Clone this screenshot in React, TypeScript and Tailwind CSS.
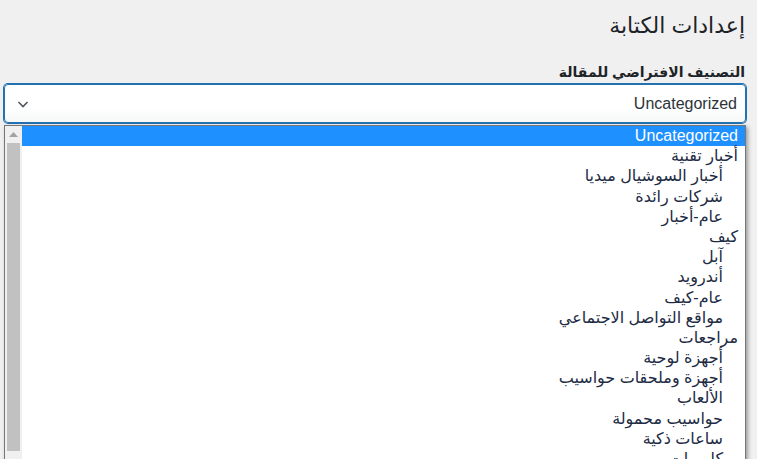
import * as React from "react"

type Cat = { name: string; depth: number }

const categories: Cat[] = [
  { name: "Uncategorized", depth: 0 },
  { name: "أخبار تقنية", depth: 0 },
  { name: "أخبار السوشيال ميديا", depth: 1 },
  { name: "شركات رائدة", depth: 1 },
  { name: "عام-أخبار", depth: 1 },
  { name: "كيف", depth: 0 },
  { name: "آبل", depth: 1 },
  { name: "أندرويد", depth: 1 },
  { name: "عام-كيف", depth: 1 },
  { name: "مواقع التواصل الاجتماعي", depth: 1 },
  { name: "مراجعات", depth: 0 },
  { name: "أجهزة لوحية", depth: 1 },
  { name: "أجهزة وملحقات حواسيب", depth: 1 },
  { name: "الألعاب", depth: 1 },
  { name: "حواسيب محمولة", depth: 1 },
  { name: "ساعات ذكية", depth: 1 },
  { name: "كاميرات", depth: 1 },
  { name: "هواتف ذكية", depth: 1 },
]

export default function App() {
  const [selected] = React.useState(0)

  return (
    <div
      dir="rtl"
      className="relative h-[459px] w-full overflow-hidden bg-[#f0f0f1] text-[#1d2327] [font-family:'Liberation_Sans','DejaVu_Sans',sans-serif]"
    >
      <div className="pl-[4px] pr-[11px]">
        <h1 className="pr-[1px] pt-[11px] text-[22px] leading-[30px] font-normal">إعدادات الكتابة</h1>
        <label className="mt-[22px] block pr-[1px] text-[14px] leading-[18px] font-bold">
          التصنيف الافتراضي للمقالة
        </label>
        <div className="mt-[3px] flex h-[39px] items-center justify-between rounded-[4px] border border-[#2271b1] bg-gradient-to-b from-white from-60% to-[#f6f7f7] pl-[10px] pr-[8px] shadow-[0_0_0_1px_#2271b1]">
          <span className="text-[16px] text-[#2c3338]">Uncategorized</span>
          <svg width="16" height="16" viewBox="0 0 16 16" className="text-[#50575e]">
            <path d="M3.5 6l4.5 4.5L12.5 6" fill="none" stroke="currentColor" strokeWidth="1.6" />
          </svg>
        </div>
      </div>

      {/* open native listbox */}
      <div className="absolute left-[4px] top-[125px] flex h-[400px] w-[742px] flex-row-reverse border border-[#767676] bg-white shadow-[2px_2px_4px_rgba(0,0,0,0.35)]">
        <div className="flex w-[17px] shrink-0 flex-col items-center bg-[#f0f0f0]">
          <svg width="9" height="5" viewBox="0 0 9 5" className="mt-[6px]">
            <path d="M0 5L4.5 0L9 5Z" fill="#a3a3a3" />
          </svg>
          <div className="mt-[6px] h-[308px] w-[13px] bg-[#c1c1c1]" />
        </div>
        <ul className="flex-1">
          {categories.map((c, i) => (
            <li
              key={c.name}
              className={
                "h-[20.2px] whitespace-nowrap text-[16px] leading-[20px] " +
                (i === selected ? "bg-[#1e90ff] text-white" : "text-[#1d2b44]") +
                (c.depth ? " pr-[22px]" : " pr-[7px]")
              }
            >
              {c.name}
            </li>
          ))}
        </ul>
      </div>
    </div>
  )
}
